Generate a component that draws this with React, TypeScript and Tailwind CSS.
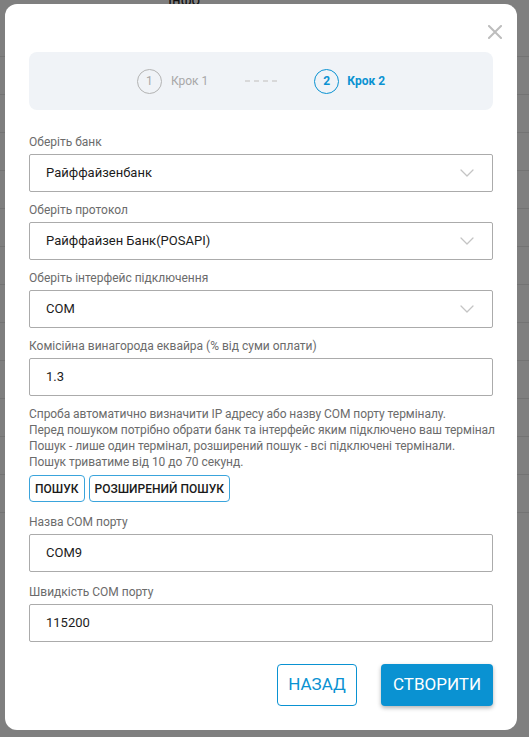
import { ChevronDown } from "lucide-react";

function SelectField({ label, value }: { label: string; value: string }) {
  return (
    <div className="flex flex-col">
      <label className="mb-1 text-[12px] leading-4 text-[#6b6b6b]">{label}</label>
      <div className="flex h-[38px] items-center justify-between rounded-[2px] border border-[#ababab] pl-4 pr-[13px] text-[13px] text-[#1c1c1c]">
        <span>{value}</span>
        <ChevronDown size={24} strokeWidth={1.25} className="text-[#c4c4c4]" />
      </div>
    </div>
  );
}

function InputField({ label, value, className = "" }: { label: string; value: string; className?: string }) {
  return (
    <div className={"flex flex-col " + className}>
      <label className="mb-1 text-[12px] leading-4 text-[#6b6b6b]">{label}</label>
      <div className="flex h-[38px] items-center rounded-[2px] border border-[#ababab] pl-4 text-[13px] text-[#1c1c1c]">
        {value}
      </div>
    </div>
  );
}

function Stepper() {
  return (
    <div className="mt-[13px] flex h-[58px] items-center justify-center rounded-lg bg-[#f0f3f7]">
      <div className="flex items-center gap-[9px]">
        <div className="flex h-[25px] w-[25px] items-center justify-center rounded-full border border-[#b3b3b3] text-[12px] text-[#a8a8a8]">
          1
        </div>
        <span className="text-[12px] text-[#a8a8a8]">Крок 1</span>
      </div>
      <svg width="32" height="2" className="mx-[37px]">
        <line x1="0" y1="1" x2="32" y2="1" stroke="#cfcfcf" strokeWidth="1.5" strokeDasharray="5 4" />
      </svg>
      <div className="flex items-center gap-[8px]">
        <div className="flex h-[25px] w-[25px] items-center justify-center rounded-full border-[1.5px] border-[#0a92d2] text-[12px] font-bold text-[#0a92d2]">
          2
        </div>
        <span className="text-[12px] font-bold text-[#0a92d2]">Крок 2</span>
      </div>
    </div>
  );
}

export default function App() {
  const rows = Array.from({ length: 12 });

  return (
    <div className="relative h-[737px] overflow-hidden bg-[#7f7f7f] font-['Roboto',sans-serif]">
      {/* page behind the overlay */}
      <div className="flex flex-col">
        <div className="h-[57px] border-b border-[#737373]">
          <span className="-mt-[11px] ml-[168px] block text-[15px] text-[#111]">Інфо</span>
        </div>
        {rows.map((_, i) => (
          <div key={i} className="h-[38px] border-b border-[#737373]" />
        ))}
      </div>

      {/* modal */}
      <div className="absolute left-[5px] top-[4px] flex h-[726px] w-[512px] flex-col rounded-[12px] bg-white px-6 pb-6 pt-[21px]">
        <div className="-mr-[9px] flex justify-end">
          <svg width="14" height="14" viewBox="0 0 14 14">
            <path d="M1 1 13 13M13 1 1 13" stroke="#bdbdbd" strokeWidth="2" strokeLinecap="square" />
          </svg>
        </div>

        <Stepper />

        <div className="mt-6 flex flex-col gap-[10px]">
          <SelectField label="Оберіть банк" value="Райффайзенбанк" />
          <SelectField label="Оберіть протокол" value="Райффайзен Банк(POSAPI)" />
          <SelectField label="Оберіть інтерфейс підключення" value="COM" />
          <InputField label="Комісійна винагорода еквайра (% від суми оплати)" value="1.3" />

          <div className="mb-[2px] flex flex-col">
            <p className="whitespace-nowrap text-[12px] leading-4 tracking-[-0.05px] text-[#6b6b6b]">
              Спроба автоматично визначити IP адресу або назву COM порту терміналу.
              <br />
              Перед пошуком потрібно обрати банк та інтерфейс яким підключено ваш термінал
              <br />
              Пошук - лише один термінал, розширений пошук - всі підключені термінали.
              <br />
              Пошук триватиме від 10 до 70 секунд.
            </p>
            <div className="mt-[5px] flex gap-1">
              <button className="h-[27px] rounded-[4px] border border-[#3aa4dc] px-[5px] text-[12px] font-medium text-[#1a1a1a]">
                ПОШУК
              </button>
              <button className="h-[27px] rounded-[4px] border border-[#3aa4dc] px-[5px] text-[12px] font-medium text-[#1a1a1a]">
                РОЗШИРЕНИЙ ПОШУК
              </button>
            </div>
          </div>

          <InputField label="Назва COM порту" value="COM9" />
          <InputField label="Швидкість COM порту" value="115200" className="mt-[2px]" />
        </div>

        <div className="mt-auto flex justify-end gap-6">
          <button className="h-[42px] w-[80px] rounded-[4px] border border-[#0a92d2] text-[17px] text-[#0a92d2]">
            НАЗАД
          </button>
          <button className="h-[42px] w-[112px] rounded-[4px] bg-[#0a92d2] text-[17px] text-white shadow-[0_2px_4px_rgba(0,0,0,0.3)]">
            СТВОРИТИ
          </button>
        </div>
      </div>
    </div>
  );
}
